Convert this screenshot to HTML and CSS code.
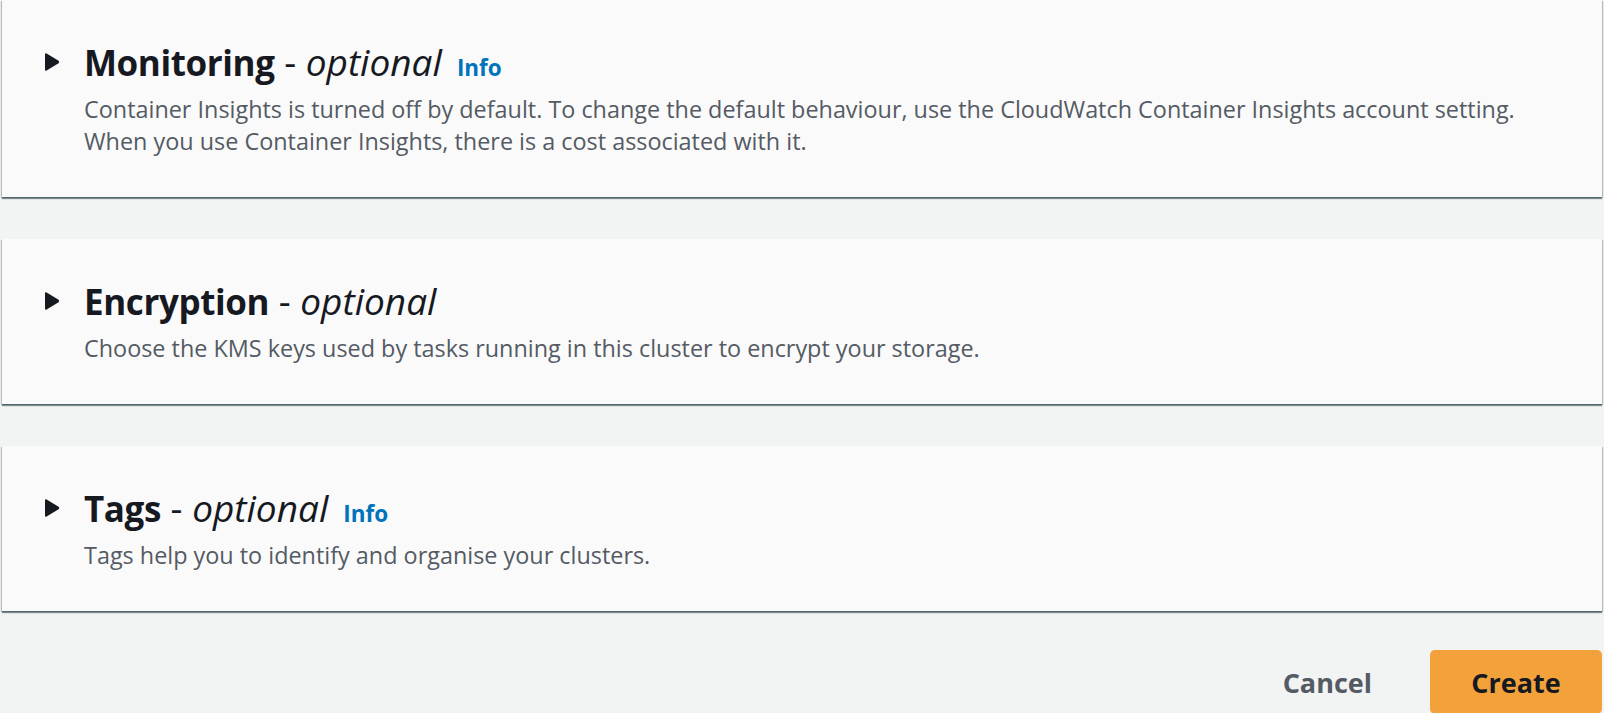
FILE: index.html
```html
<!DOCTYPE html>
<html lang="en">
<head>
<meta charset="utf-8">
<title>Create cluster</title>
<link rel="stylesheet" href="styles.css">
</head>
<body>
<main class="page">
  <section class="panel">
    <div class="panel-head">
      <svg class="caret" viewBox="0 0 16 20" width="16" height="20" aria-hidden="true"><path d="M2.6 1.4 L14.6 8.8 Q15.8 10 14.6 11.2 L2.6 18.6 Q1 19.4 1 17.6 V2.4 Q1 0.6 2.6 1.4 Z"/></svg>
      <div class="panel-text">
        <h2 class="title"><span class="title-main">Monitoring</span> - <i class="title-opt">optional</i><a class="info" href="#">Info</a></h2>
        <p class="desc">Container Insights is turned off by default. To change the default behaviour, use the CloudWatch Container Insights account setting.<br>When you use Container Insights, there is a cost associated with it.</p>
      </div>
    </div>
  </section>
  <section class="panel">
    <div class="panel-head">
      <svg class="caret" viewBox="0 0 16 20" width="16" height="20" aria-hidden="true"><path d="M2.6 1.4 L14.6 8.8 Q15.8 10 14.6 11.2 L2.6 18.6 Q1 19.4 1 17.6 V2.4 Q1 0.6 2.6 1.4 Z"/></svg>
      <div class="panel-text">
        <h2 class="title"><span class="title-main">Encryption</span> - <i class="title-opt">optional</i></h2>
        <p class="desc">Choose the KMS keys used by tasks running in this cluster to encrypt your storage.</p>
      </div>
    </div>
  </section>
  <section class="panel">
    <div class="panel-head">
      <svg class="caret" viewBox="0 0 16 20" width="16" height="20" aria-hidden="true"><path d="M2.6 1.4 L14.6 8.8 Q15.8 10 14.6 11.2 L2.6 18.6 Q1 19.4 1 17.6 V2.4 Q1 0.6 2.6 1.4 Z"/></svg>
      <div class="panel-text">
        <h2 class="title"><span class="title-main">Tags</span> - <i class="title-opt">optional</i><a class="info" href="#">Info</a></h2>
        <p class="desc">Tags help you to identify and organise your clusters.</p>
      </div>
    </div>
  </section>
  <div class="actions">
    <button class="btn btn-link" type="button">Cancel</button>
    <button class="btn btn-primary" type="button">Create</button>
  </div>
</main>
</body>
</html>
```

FILE: styles.css
```css
html, body {
  margin: 0;
  padding: 0;
}
body {
  background: #f2f3f3;
  font-family: "Open Sans", "Noto Sans", "Liberation Sans", sans-serif;
  color: #16191f;
  overflow: hidden;
}
.page {
  width: 1600px;
  margin-left: 2px;
  display: flex;
  flex-direction: column;
  gap: 42px;
}
.panel {
  background: #fafafa;
  box-shadow: 0 2px 1px 0 rgba(0, 28, 36, 0.45), 1px 1px 1px 0 rgba(0, 28, 36, 0.2), -1px 1px 1px 0 rgba(0, 28, 36, 0.2);
  padding: 40px 40px 40px 42px;
}
.panel-head {
  display: flex;
  align-items: flex-start;
  gap: 24px;
}
.caret {
  fill: #16191f;
  margin-top: 12px;
  flex: none;
}
.panel-text {
  display: flex;
  flex-direction: column;
  gap: 9px;
}
.title {
  margin: 0;
  font-size: 37px;
  line-height: 44px;
  height: 44px;
  font-weight: 400;
  color: #16191f;
}
.title-main {
  font-size: 35px;
  line-height: 1;
  font-weight: 700;
  letter-spacing: -0.4px;
}
.title-opt {
  font-style: italic;
  line-height: 1;
}
.info {
  font-size: 22.5px;
  line-height: 1;
  font-weight: 700;
  color: #0073bb;
  text-decoration: none;
  margin-left: 15px;
}
.desc {
  margin: 0;
  font-size: 23.4px;
  line-height: 32px;
  color: #545b64;
}
.actions {
  display: flex;
  justify-content: flex-end;
  gap: 15px;
  margin-top: -3px;
}
.btn {
  font-family: inherit;
  font-size: 27px;
  font-weight: 700;
  height: 64px;
  padding: 0 43px;
  border-radius: 5px;
  border: 0;
  cursor: pointer;
}
.btn-link {
  background: transparent;
  color: #545b64;
}
.btn-primary {
  background: #f2a13b;
  color: #16191f;
  width: 172px;
  padding: 0;
}
```
